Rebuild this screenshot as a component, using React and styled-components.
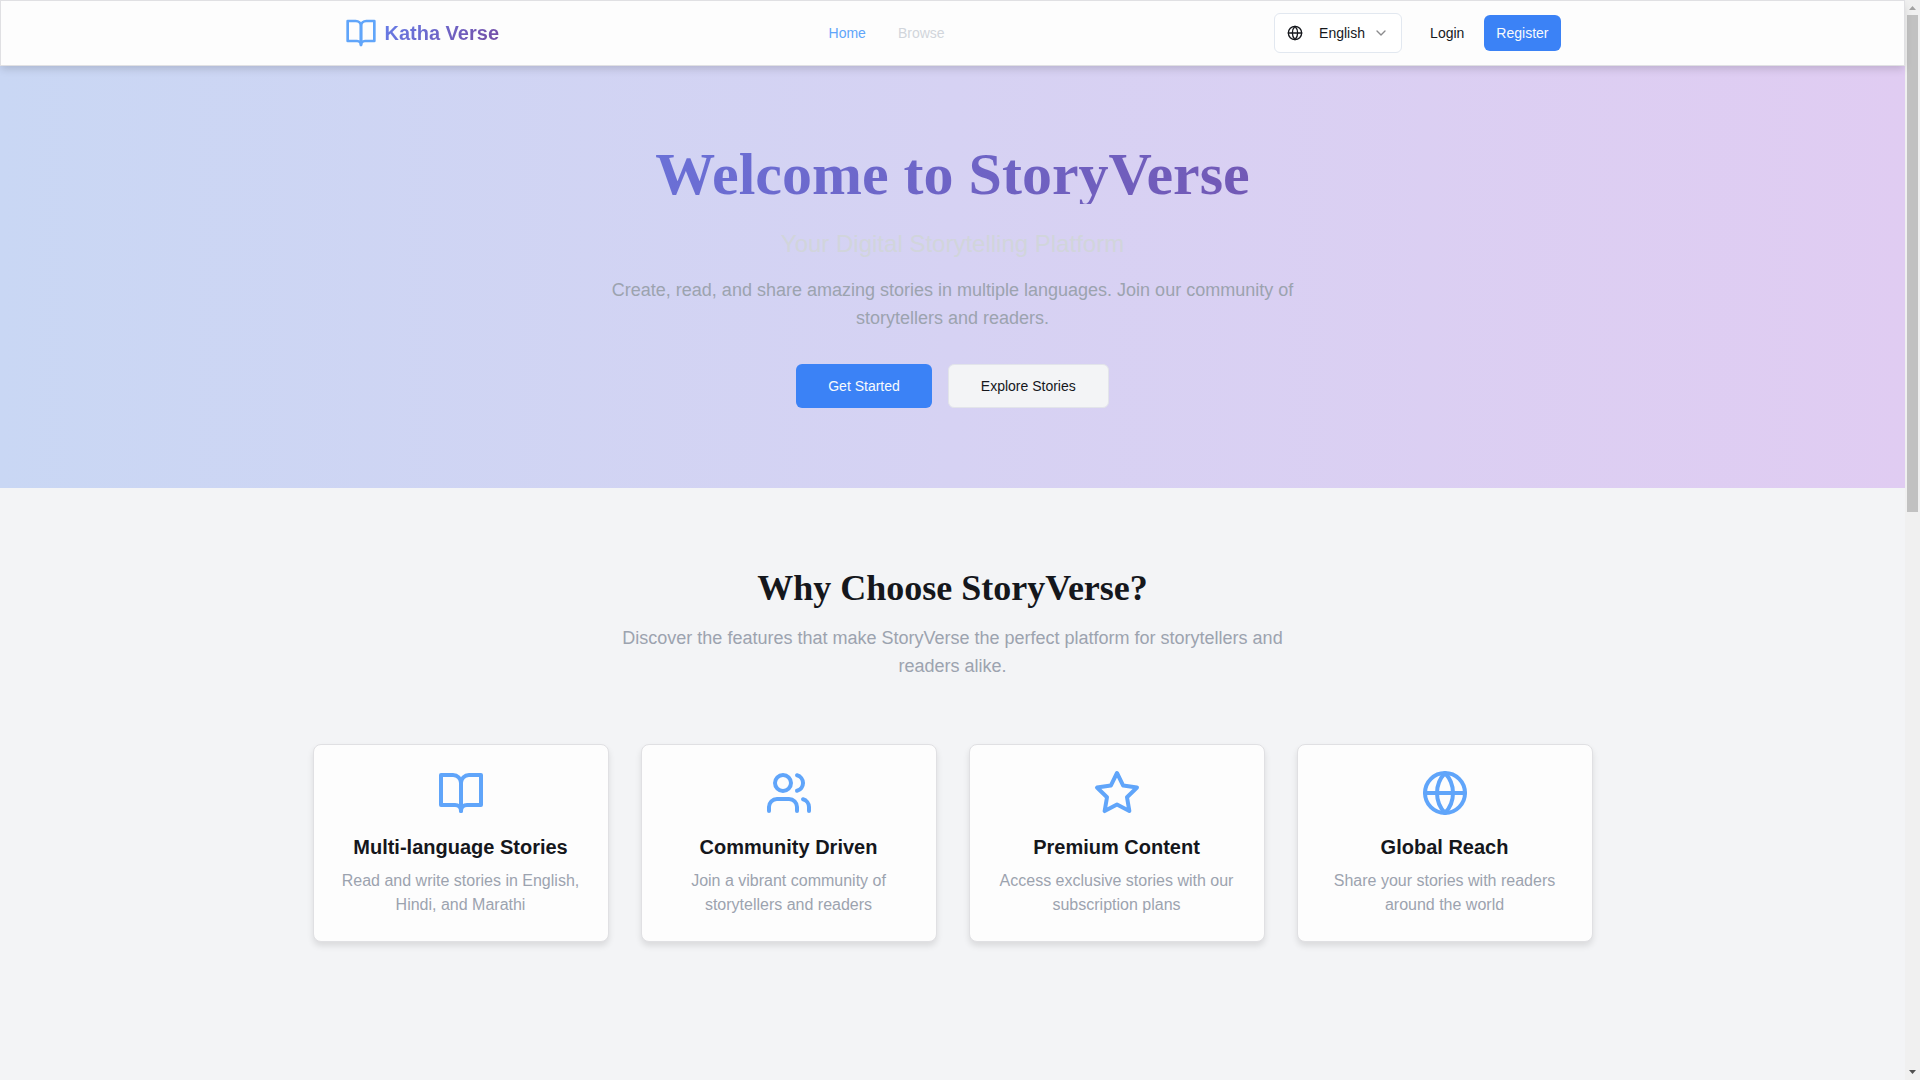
import React from "react";
import styled, { createGlobalStyle } from "styled-components";

const features = [
  {
    icon: "book",
    title: "Multi-language Stories",
    text: "Read and write stories in English, Hindi, and Marathi",
  },
  {
    icon: "users",
    title: "Community Driven",
    text: "Join a vibrant community of storytellers and readers",
  },
  {
    icon: "star",
    title: "Premium Content",
    text: "Access exclusive stories with our subscription plans",
  },
  {
    icon: "globe",
    title: "Global Reach",
    text: "Share your stories with readers around the world",
  },
];

const shapes = {
  book: (
    <>
      <path d="M2 3h6a4 4 0 0 1 4 4v14a3 3 0 0 0-3-3H2z" />
      <path d="M22 3h-6a4 4 0 0 0-4 4v14a3 3 0 0 1 3-3h7z" />
    </>
  ),
  users: (
    <>
      <path d="M16 21v-2a4 4 0 0 0-4-4H6a4 4 0 0 0-4 4v2" />
      <circle cx="9" cy="7" r="4" />
      <path d="M22 21v-2a4 4 0 0 0-3-3.87" />
      <path d="M16 3.13a4 4 0 0 1 0 7.75" />
    </>
  ),
  star: (
    <polygon points="12 2 15.09 8.26 22 9.27 17 14.14 18.18 21.02 12 17.77 5.82 21.02 7 14.14 2 9.27 8.91 8.26 12 2" />
  ),
  globe: (
    <>
      <circle cx="12" cy="12" r="10" />
      <path d="M12 2a14.5 14.5 0 0 0 0 20 14.5 14.5 0 0 0 0-20" />
      <path d="M2 12h20" />
    </>
  ),
  chevron: <path d="m6 9 6 6 6-6" />,
};

const Icon = ({ name, size, color }) => (
  <Svg viewBox="0 0 24 24" $size={size} $color={color} aria-hidden="true">
    {shapes[name]}
  </Svg>
);

const App = () => {
  return (
    <Shell>
      <GlobalStyle />
      <Page>
        <Header>
          <HeaderInner>
            <Brand href="#">
              <Icon name="book" size={32} color="#60a5fa" />
              <BrandName>Katha Verse</BrandName>
            </Brand>
            <Nav>
              <NavLink href="#" $active>
                Home
              </NavLink>
              <NavLink href="#browse">Browse</NavLink>
            </Nav>
            <Actions>
              <Language>
                <Icon name="globe" size={16} color="#15171c" />
                <LanguageSelect aria-label="Language" defaultValue="en">
                  <option value="en">English</option>
                  <option value="hi">Hindi</option>
                  <option value="mr">Marathi</option>
                </LanguageSelect>
                <Icon name="chevron" size={16} color="#8b8b8d" />
              </Language>
              <AuthButtons>
                <Button $variant="ghost">Login</Button>
                <Button $variant="primary">Register</Button>
              </AuthButtons>
            </Actions>
          </HeaderInner>
        </Header>
        <Hero>
          <HeroTitle>Welcome to StoryVerse</HeroTitle>
          <HeroSubtitle>Your Digital Storytelling Platform</HeroSubtitle>
          <Lead $width={768}>
            Create, read, and share amazing stories in multiple languages. Join
            our community of storytellers and readers.
          </Lead>
          <HeroButtons>
            <Button $variant="primary" $large>
              Get Started
            </Button>
            <Button $variant="outline" $large>
              Explore Stories
            </Button>
          </HeroButtons>
        </Hero>
        <Section>
          <SectionTitle>Why Choose StoryVerse?</SectionTitle>
          <Lead $width={672}>
            Discover the features that make StoryVerse the perfect platform for
            storytellers and readers alike.
          </Lead>
          <Grid>
            {features.map((feature) => (
              <Card key={feature.title}>
                <Icon name={feature.icon} size={48} color="#60a5fa" />
                <CardTitle>{feature.title}</CardTitle>
                <CardText>{feature.text}</CardText>
              </Card>
            ))}
          </Grid>
        </Section>
      </Page>
      <Scrollbar aria-hidden="true">
        <Arrow viewBox="0 0 15 15">
          <path d="M4 10h7L7.5 6z" fill="#a3a3a3" />
        </Arrow>
        <Track>
          <Thumb />
        </Track>
        <Arrow viewBox="0 0 15 15">
          <path d="M4 5h7L7.5 9z" fill="#505050" />
        </Arrow>
      </Scrollbar>
    </Shell>
  );
};
export default App;

const GlobalStyle = createGlobalStyle`
  * {
    box-sizing: border-box;
    margin: 0;
  }
  body {
    background-color: #f3f4f6;
    color: #15171c;
    font-family: "Liberation Sans", Arial, sans-serif;
    font-size: 16px;
    line-height: 24px;
  }
`;
const Shell = styled.div`
  display: flex;
  height: 100vh;
  overflow: hidden;
`;
const Page = styled.div`
  flex: 1;
  min-width: 0;
  display: flex;
  flex-direction: column;
`;
const Svg = styled.svg`
  width: ${(props) => props.$size}px;
  height: ${(props) => props.$size}px;
  flex-shrink: 0;
  fill: none;
  stroke: ${(props) => props.$color};
  stroke-width: 2;
  stroke-linecap: round;
  stroke-linejoin: round;
`;
const Header = styled.header`
  position: sticky;
  top: 0;
  z-index: 10;
  flex-shrink: 0;
  margin-bottom: -2px;
  background-color: #fdfdfd;
  border: 1px solid #e0e0e3;
  box-shadow: 0 4px 8px -1px rgba(0, 0, 0, 0.15);
`;
const HeaderInner = styled.div`
  max-width: 1280px;
  height: 64px;
  margin: 0 auto;
  padding: 0 32px;
  display: flex;
  justify-content: space-between;
  align-items: center;
`;
const Brand = styled.a`
  display: flex;
  align-items: center;
  gap: 8px;
  text-decoration: none;
`;
const BrandName = styled.span`
  font-size: 20px;
  line-height: 28px;
  font-weight: bold;
  color: transparent;
  background: linear-gradient(135deg, #667eea 0%, #764ba2 100%);
  background-clip: text;
`;
const Nav = styled.nav`
  display: flex;
  gap: 32px;
`;
const NavLink = styled.a`
  font-size: 14px;
  line-height: 20px;
  text-decoration: none;
  color: ${(props) => (props.$active ? "#60a5fa" : "#d1d5db")};
`;
const Actions = styled.div`
  display: flex;
  align-items: center;
  gap: 16px;
`;
const Language = styled.div`
  width: 128px;
  height: 40px;
  padding: 0 12px;
  display: flex;
  align-items: center;
  background-color: white;
  border: 1px solid #e2e8f0;
  border-radius: 6px;
`;
const LanguageSelect = styled.select`
  flex: 1;
  min-width: 0;
  appearance: none;
  padding: 0 0 0 16px;
  border: none;
  background: none;
  color: #15171c;
  font-family: inherit;
  font-size: 14px;
  line-height: 20px;
`;
const AuthButtons = styled.div`
  display: flex;
  gap: 8px;
`;
const variants = {
  primary: "background-color: #3b82f6; color: #f8fafc;",
  ghost: "background-color: transparent; color: #15171c;",
  outline:
    "background-color: #f3f4f6; color: #15171c; border: 1px solid #e2e4ea;",
};
const Button = styled.button`
  height: ${(props) => (props.$large ? "44px" : "36px")};
  padding: 0 ${(props) => (props.$large ? "32px" : "12px")};
  border: none;
  border-radius: 6px;
  font-family: inherit;
  font-size: 14px;
  line-height: 20px;
  cursor: pointer;
  ${(props) => variants[props.$variant]}
`;
const Hero = styled.section`
  flex-shrink: 0;
  padding: 80px 32px;
  text-align: center;
  background: linear-gradient(to right, #c9d7f4, #d6d2f3, #e0ccf2);
`;
const HeroTitle = styled.h1`
  max-width: 1280px;
  margin: 0 auto 24px;
  font-family: "Liberation Serif", "Times New Roman", serif;
  font-size: 60px;
  line-height: 60px;
  color: transparent;
  background: linear-gradient(135deg, #667eea 0%, #764ba2 100%);
  background-clip: text;
`;
const HeroSubtitle = styled.p`
  margin-bottom: 16px;
  font-size: 24px;
  line-height: 32px;
  color: #d1d5db;
`;
const Lead = styled.p`
  max-width: ${(props) => props.$width}px;
  margin: 0 auto;
  font-size: 18px;
  line-height: 28px;
  color: #9ca3af;
`;
const HeroButtons = styled.div`
  margin-top: 32px;
  display: flex;
  justify-content: center;
  gap: 16px;
`;
const Section = styled.section`
  padding: 80px 32px;
  text-align: center;
`;
const SectionTitle = styled.h2`
  margin-bottom: 16px;
  font-family: "Liberation Serif", "Times New Roman", serif;
  font-size: 36px;
  line-height: 40px;
`;
const Grid = styled.div`
  max-width: 1280px;
  margin: 64px auto 0;
  display: grid;
  grid-template-columns: repeat(4, 1fr);
  gap: 32px;
`;
const Card = styled.article`
  padding: 24px;
  display: flex;
  flex-direction: column;
  align-items: center;
  background-color: #fdfdfd;
  border: 1px solid #e0e0e3;
  border-radius: 8px;
  box-shadow: 0 4px 6px rgba(0, 0, 0, 0.1);
`;
const CardTitle = styled.h3`
  margin: 16px 0 8px;
  font-size: 20px;
  line-height: 28px;
`;
const CardText = styled.p`
  color: #9ca3af;
`;
const Scrollbar = styled.div`
  width: 15px;
  flex-shrink: 0;
  display: flex;
  flex-direction: column;
  background-color: #f0f0f0;
`;
const Arrow = styled.svg`
  width: 15px;
  height: 15px;
`;
const Track = styled.div`
  flex: 1;
  padding: 0 2px;
  display: grid;
  grid-template-rows: 9fr 10fr;
`;
const Thumb = styled.div`
  background-color: #c1c1c1;
`;
